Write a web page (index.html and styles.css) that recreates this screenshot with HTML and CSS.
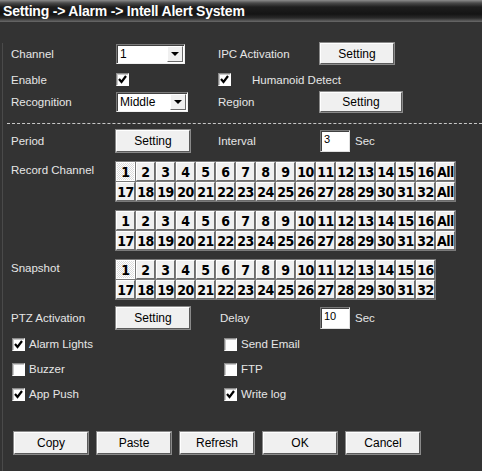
FILE: index.html
```html
<!DOCTYPE html>
<html>
<head>
	<title>Intell Alert System</title>
	<link rel="stylesheet" href="styles.css">
</head>
<body>
	<div class="window">
		<div class="title">Setting -&gt; Alarm -&gt; Intell Alert System</div>

		<div class="form">
			<div class="row row-channel">
				<span class="label">Channel</span>
				<div class="select"><span class="value">1</span><span class="arrow"></span></div>
				<span class="label">IPC Activation</span>
				<button class="btn">Setting</button>
			</div>

			<div class="row row-enable">
				<span class="label">Enable</span>
				<div><span class="check on"></span></div>
				<div class="pair"><span class="check on"></span><span class="label humanoid">Humanoid Detect</span></div>
				<div></div>
			</div>

			<div class="row row-recog">
				<span class="label">Recognition</span>
				<div class="select wide"><span class="value">Middle</span><span class="arrow"></span></div>
				<span class="label">Region</span>
				<button class="btn btn-region">Setting</button>
			</div>

			<div class="divider"></div>

			<div class="row row-period">
				<span class="label">Period</span>
				<button class="btn">Setting</button>
				<span class="label">Interval</span>
				<div class="pair"><span class="num">3</span><span class="label unit">Sec</span></div>
			</div>

			<div class="row row-grid">
				<span class="label grid-label">Record Channel</span>
				<div class="grid" id="rec-a"></div>
			</div>

			<div class="row row-grid second">
				<span class="label"></span>
				<div class="grid" id="rec-b"></div>
			</div>

			<div class="row row-grid second">
				<span class="label grid-label">Snapshot</span>
				<div class="grid" id="snap"></div>
			</div>

			<div class="row row-ptz">
				<span class="label">PTZ Activation</span>
				<button class="btn">Setting</button>
				<span class="label delay">Delay</span>
				<div class="pair"><span class="num">10</span><span class="label unit">Sec</span></div>
			</div>

			<div class="checks">
				<div class="check-row">
					<label class="opt"><span class="check on"></span>Alarm Lights</label>
					<label class="opt"><span class="check"></span>Send Email</label>
				</div>
				<div class="check-row">
					<label class="opt"><span class="check"></span>Buzzer</label>
					<label class="opt"><span class="check"></span>FTP</label>
				</div>
				<div class="check-row">
					<label class="opt"><span class="check on"></span>App Push</label>
					<label class="opt"><span class="check on"></span>Write log</label>
				</div>
			</div>

			<div class="actions">
				<button class="btn act">Copy</button>
				<button class="btn act">Paste</button>
				<button class="btn act">Refresh</button>
				<button class="btn act">OK</button>
				<button class="btn act">Cancel</button>
			</div>
		</div>
	</div>

	<script>
		function fillGrid(id, withAll, selectFirst) {
			const grid = document.getElementById(id);
			const rows = [[1, 16], [17, 32]];
			for (const [from, to] of rows) {
				for (let n = from; n <= to; n++) {
					const cell = document.createElement("span");
					cell.className = "cell";
					if (selectFirst && n === 1) cell.className += " sel";
					cell.textContent = n;
					grid.appendChild(cell);
				}
				if (withAll) {
					const all = document.createElement("span");
					all.className = "cell";
					all.textContent = "All";
					grid.appendChild(all);
				}
			}
			if (!withAll) grid.classList.add("narrow");
		}

		fillGrid("rec-a", true, true);
		fillGrid("rec-b", true, false);
		fillGrid("snap", false, true);

		const tick = '<svg width="11" height="11" viewBox="0 0 11 11"><polyline points="2,5 4.5,8 9,2" fill="none" stroke="#000" stroke-width="2.2"/></svg>';
		for (const box of document.querySelectorAll(".check.on")) {
			box.innerHTML = tick;
		}
	</script>
</body>
</html>
```

FILE: styles.css
```css
body {
	margin: 0;
	background-color: #333333;
	font-family: "Liberation Sans", Arial, sans-serif;
	font-size: 11.5px;
	color: #e6e6e6;
}

.window {
	width: 482px;
	height: 471px;
	overflow: hidden;
	background-color: #333333;
}

.title {
	height: 22px;
	line-height: 22px;
	padding-left: 3px;
	font-size: 14px;
	font-weight: bold;
	letter-spacing: -0.2px;
	color: #ffffff;
	background: linear-gradient(#8c8c8c 0, #4a4a4a 3px, #1e1e1e 7px, #141414 14px, #2a2a2a 18px, #5c5c5c 21px, #6a6a6a 22px);
}

.form {
	border-left: 1px solid #4a4a4a;
	margin-left: 2px;
	height: 449px;
}

.label {
	white-space: nowrap;
}

.row {
	display: grid;
	grid-template-columns: 105px 102px 102px auto;
	align-items: center;
	padding-left: 8px;
}

.row-channel {
	margin-top: 21px;
	height: 21px;
}

.row-enable {
	margin-top: 6px;
	height: 19px;
}

.row-recog {
	margin-top: 3px;
	height: 20px;
}

.row-period {
	margin-top: 6px;
	height: 22px;
}

.row-ptz {
	margin-top: 8px;
	height: 22px;
}

.pair {
	display: flex;
	align-items: center;
}

.humanoid {
	margin-left: 21px;
}

.delay {
	padding-left: 2px;
}

.unit {
	margin-left: 5px;
}

.select {
	box-sizing: border-box;
	width: 69px;
	height: 20px;
	background-color: #ffffff;
	border: 1px solid;
	border-color: #7a7a7a #f0f0f0 #f0f0f0 #7a7a7a;
	box-shadow: inset 1px 1px #404040;
	display: flex;
	align-items: center;
	justify-content: space-between;
	color: #000;
	font-size: 12px;
}

.select.wide {
	width: 72px;
}

.select .value {
	padding-left: 3px;
}

.select .arrow {
	box-sizing: border-box;
	width: 16px;
	height: 16px;
	margin-right: 1px;
	background-color: #f0f0f0;
	border: 1px solid;
	border-color: #ffffff #6a6a6a #6a6a6a #ffffff;
	position: relative;
}

.select .arrow::after {
	content: "";
	position: absolute;
	left: 3px;
	top: 5px;
	border-left: 4px solid transparent;
	border-right: 4px solid transparent;
	border-top: 4px solid #000;
}

.btn {
	box-sizing: border-box;
	width: 74px;
	height: 21px;
	padding: 0;
	background-color: #f0f0f0;
	border: 1px solid;
	border-color: #ffffff #5a5a5a #5a5a5a #ffffff;
	box-shadow: 0 0 0 1px #8a8a8a;
	font-family: "Liberation Sans", Arial, sans-serif;
	font-size: 12px;
	color: #000;
}

.row-period .btn,
.row-ptz .btn {
	height: 22px;
}

.btn-region {
	width: 82px;
	height: 20px;
}

.num {
	box-sizing: border-box;
	width: 30px;
	height: 22px;
	background-color: #ffffff;
	border: 1px solid;
	border-color: #7a7a7a #e0e0e0 #e0e0e0 #7a7a7a;
	box-shadow: inset 1px 1px #404040;
	color: #000;
	font-size: 11px;
	padding: 2px 0 0 3px;
}

.check {
	box-sizing: border-box;
	display: inline-flex;
	align-items: center;
	justify-content: center;
	flex: none;
	width: 13px;
	height: 13px;
	background-color: #ffffff;
	border: 1px solid;
	border-color: #8a8a8a #ffffff #ffffff #8a8a8a;
	box-shadow: inset 1px 1px #c8c8c8;
}

.divider {
	margin-top: 11px;
	margin-left: 4px;
	border-top: 1px dashed #c8c8c8;
}

.row-grid {
	margin-top: 10px;
	align-items: start;
	grid-template-columns: 105px auto;
}

.row-grid.second {
	margin-top: 10px;
}

.grid-label {
	padding-top: 2px;
}

.grid {
	display: grid;
	grid-template-columns: repeat(17, 19px);
	grid-auto-rows: 19px;
	gap: 1px;
}

.grid.narrow {
	grid-template-columns: repeat(16, 19px);
}

.cell {
	box-sizing: border-box;
	display: flex;
	align-items: center;
	justify-content: center;
	background-color: #f0f0f0;
	border: 1px solid;
	border-color: #ffffff #6a6a6a #6a6a6a #ffffff;
	box-shadow: 0 0 0 1px #7a7a7a;
	font-family: "DejaVu Sans Condensed", "DejaVu Sans", sans-serif;
	font-stretch: condensed;
	font-weight: bold;
	font-size: 14px;
	letter-spacing: -0.5px;
	color: #000;
}

.cell.sel {
	border-color: #ffffff;
	background: repeating-conic-gradient(#ffffff 0 25%, #dcdcdc 0 50%) 0 0 / 2px 2px;
}

.checks {
	margin-top: 5px;
}

.check-row {
	display: grid;
	grid-template-columns: 212px auto;
	align-items: center;
	height: 20px;
	padding-left: 9px;
	margin-bottom: 5px;
}

.opt {
	display: flex;
	align-items: center;
	gap: 4px;
}

.actions {
	display: flex;
	gap: 9px;
	margin-top: 28px;
	padding-left: 11px;
}

.btn.act {
	width: 74px;
	height: 22px;
}
```
